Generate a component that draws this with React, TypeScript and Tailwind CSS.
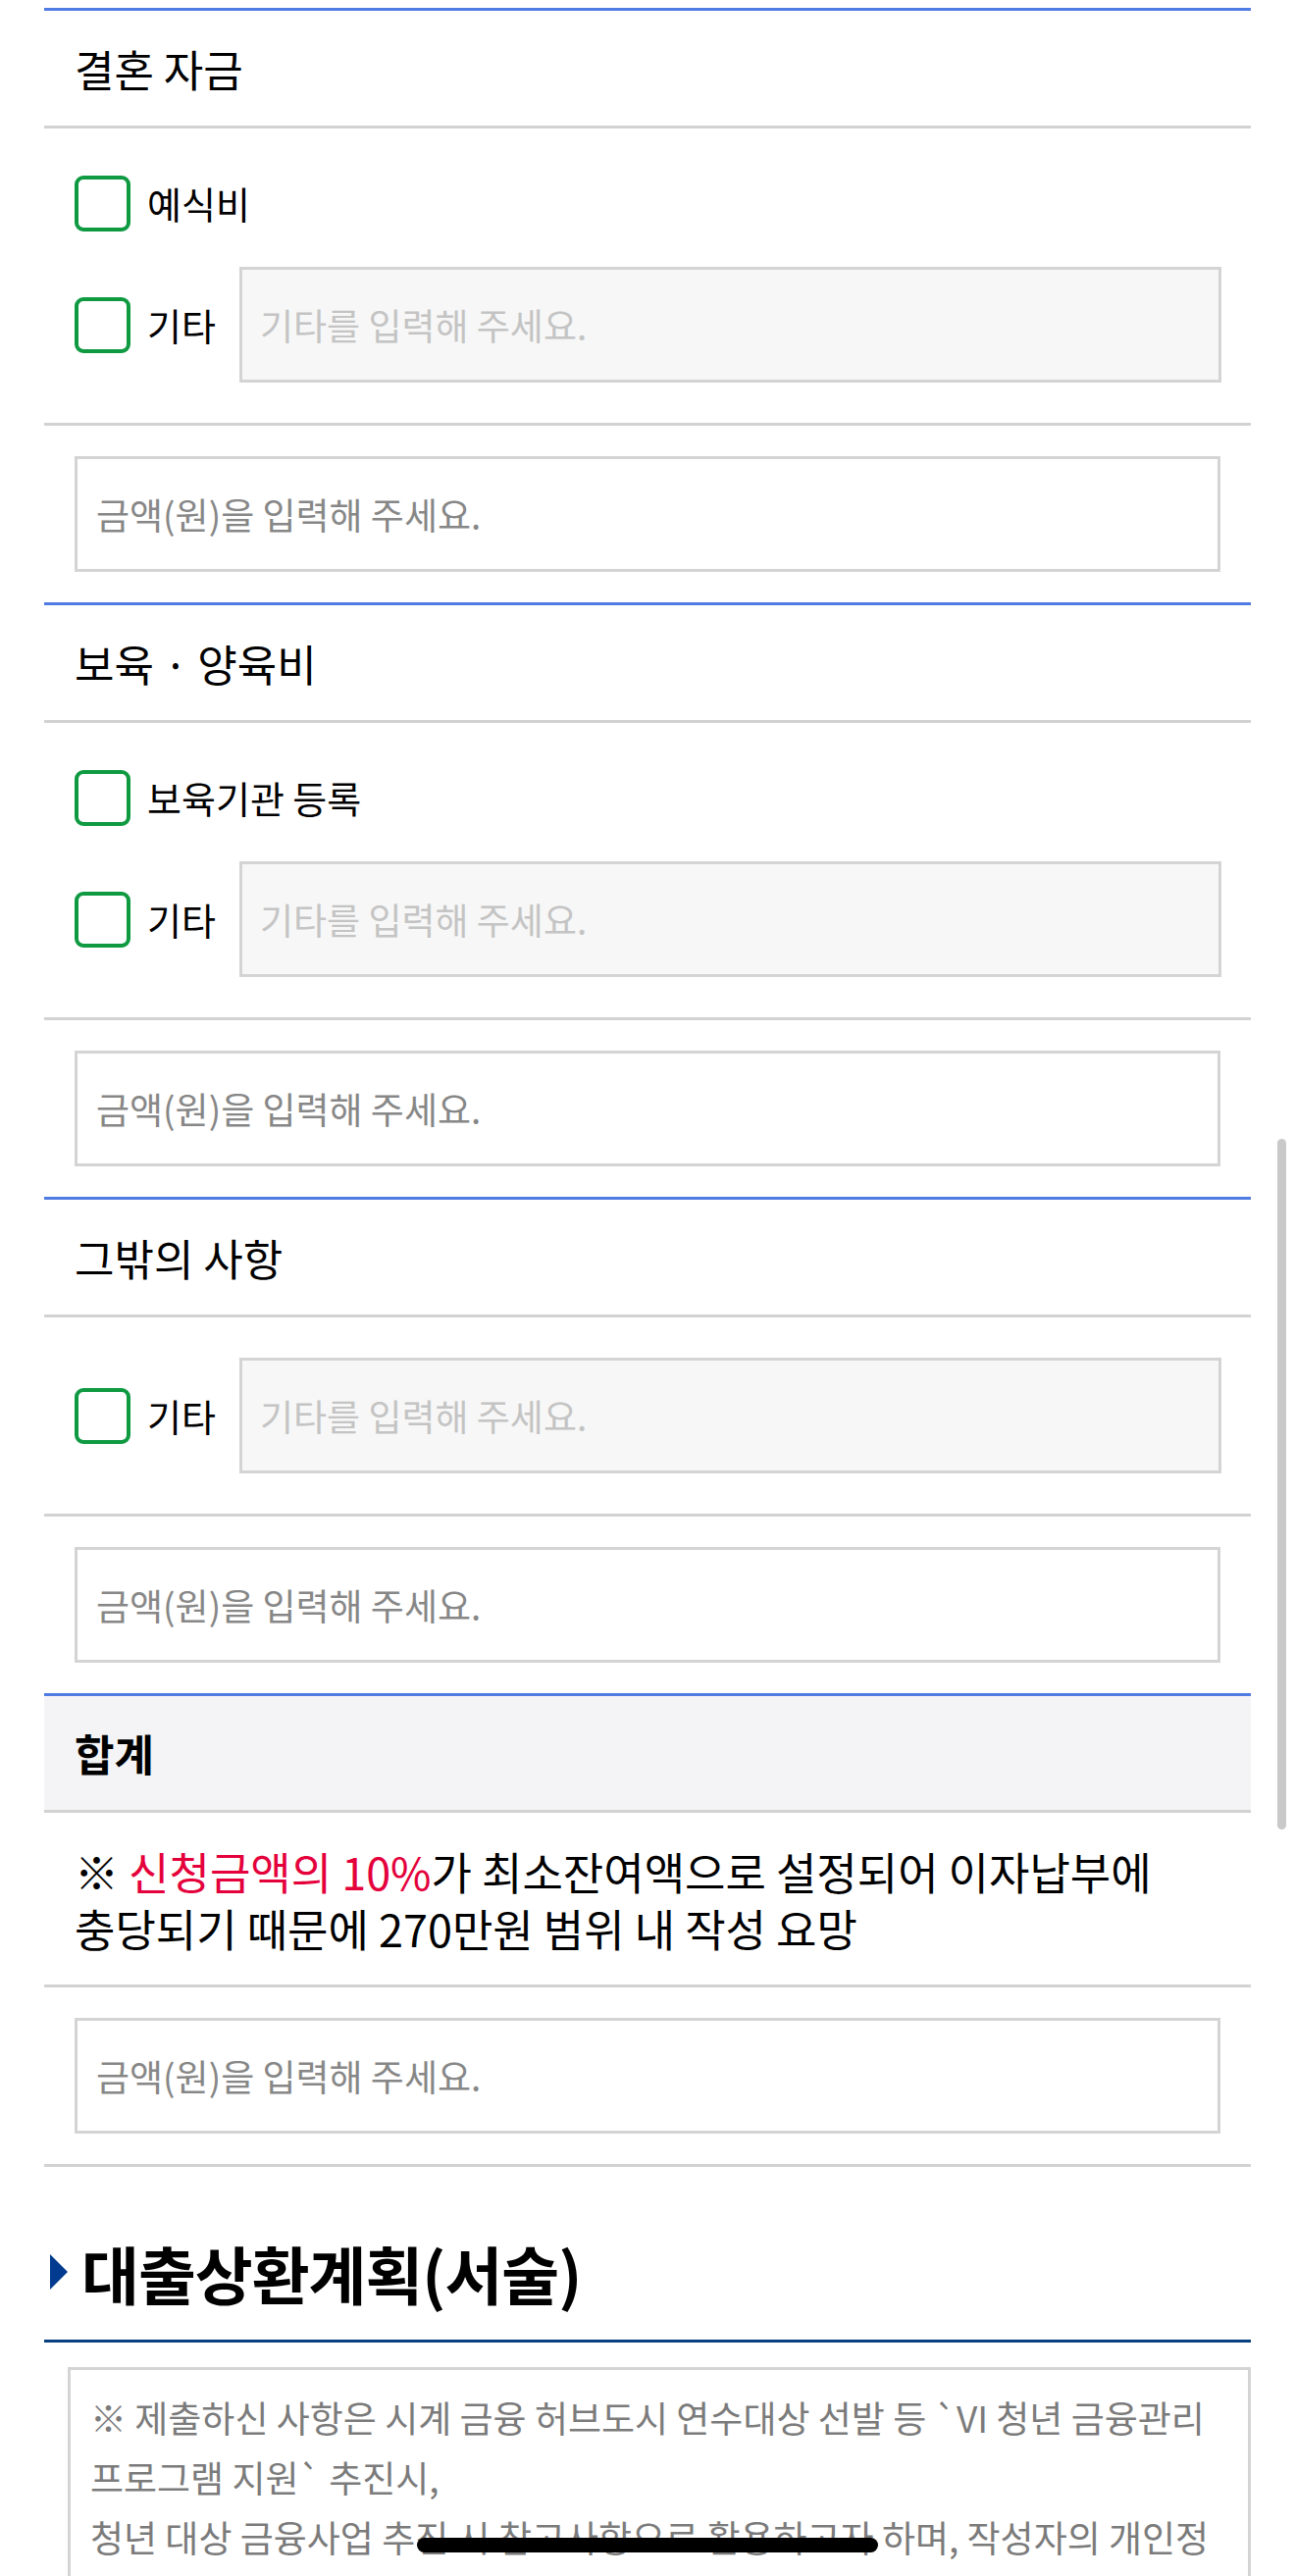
import React from "react";

const F = "font-['Noto_Sans_CJK_KR','Noto_Sans',sans-serif]";

function Checkbox() {
  return <div className="w-[57px] h-[57px] shrink-0 rounded-[9px] border-[4px] border-[#0f9a42] bg-white" />;
}

function EtcInput() {
  return (
    <div className="ml-auto w-[1001px] h-[118px] border-[3px] border-[#d4d4d4] bg-[#f7f7f7] flex items-center px-[18px] text-[37px] text-[#c4c4c4] leading-none">
      기타를 입력해 주세요.
    </div>
  );
}

function AmountRow({ last }: { last?: boolean }) {
  return (
    <div className={"pt-[31px] pb-[31px] pl-[31px] " + (last ? "border-b-[3px] border-[#d2d2d2]" : "")}>
      <div className="w-[1168px] h-[118px] border-[3px] border-[#d4d4d4] bg-white flex items-center px-[19px] text-[37px] text-[#878787] leading-none">
        금액(원)을 입력해 주세요.
      </div>
    </div>
  );
}

function Header({ title }: { title: string }) {
  return (
    <div className="h-[123px] border-t-[3px] border-b-[3px] border-t-[#4f7be3] border-b-[#d2d2d2] flex items-center pl-[31px] text-[44px] text-black leading-none">
      {title}
    </div>
  );
}

function CheckRow({ label }: { label: string }) {
  return (
    <div className="h-[70px] flex items-center">
      <Checkbox />
      <span className="ml-[17px] text-[38px] text-black leading-none">{label}</span>
    </div>
  );
}

function EtcRow() {
  return (
    <div className="h-[118px] flex items-center">
      <Checkbox />
      <span className="ml-[17px] text-[38px] text-black leading-none">기타</span>
      <EtcInput />
    </div>
  );
}

function Section({ title, options }: { title: string; options: string[] }) {
  return (
    <div>
      <Header title={title} />
      <div className="pt-[41px] pb-[41px] pl-[31px] pr-[30px] border-b-[3px] border-[#d2d2d2] flex flex-col gap-[30px]">
        {options.map((o) => (
          <CheckRow key={o} label={o} />
        ))}
        <EtcRow />
      </div>
      <AmountRow />
    </div>
  );
}

export default function App() {
  return (
    <div className={"relative w-[1320px] h-[2626px] overflow-hidden bg-white " + F}>
      <div className="ml-[45px] w-[1230px] pt-[8px]">
        <Section title="결혼 자금" options={["예식비"]} />
        <Section title="보육 · 양육비" options={["보육기관 등록"]} />
        <Section title="그밖의 사항" options={[]} />

        <div className="h-[122px] border-t-[3px] border-b-[3px] border-t-[#4f7be3] border-b-[#d2d2d2] bg-[#f4f4f6] flex items-center pl-[31px] text-[44px] font-bold text-black leading-none">
          합계
        </div>
        <div className="h-[178px] pt-[31px] pl-[31px] border-b-[3px] border-[#d2d2d2] text-[45px] leading-[58px] text-black whitespace-nowrap">
          ※ <span className="text-[#e4003b]">신청금액의 10%</span>가 최소잔여액으로 설정되어 이자납부에
          <br />
          충당되기 때문에 270만원 범위 내 작성 요망
        </div>
        <AmountRow last />

        <div className="mt-[67px] h-[80px] flex items-center pl-[6px]">
          <svg width="18" height="36" viewBox="0 0 18 36" className="shrink-0">
            <polygon points="0,0 18,18 0,36" fill="#003b8f" />
          </svg>
          <span className="ml-[14px] text-[64px] font-bold text-black leading-none tracking-[-1px]">대출상환계획(서술)</span>
        </div>
        <div className="mt-[29px] h-[3px] bg-[#073f7f]" />
        <div className="mt-[25px] ml-[24px] w-[1206px] h-[400px] border-[3px] border-[#d4d4d4] pt-[18px] pl-[20px] text-[37px] leading-[61px] text-[#7b7b7b]">
          <div className="whitespace-nowrap">※ 제출하신 사항은 시계 금융 허브도시 연수대상 선발 등 `VI 청년 금융관리</div>
          <div className="whitespace-nowrap">프로그램 지원` 추진시,</div>
          <div className="whitespace-nowrap">청년 대상 금융사업 추진 시 참고사항으로 활용하고자 하며, 작성자의 개인정</div>
        </div>
      </div>

      <div className="absolute left-[1302px] top-[1161px] w-[9px] h-[704px] rounded-full bg-[#c9c9c9]" />
      <div className="absolute left-[425px] top-[2587px] w-[470px] h-[15px] rounded-full bg-black" />
    </div>
  );
}
